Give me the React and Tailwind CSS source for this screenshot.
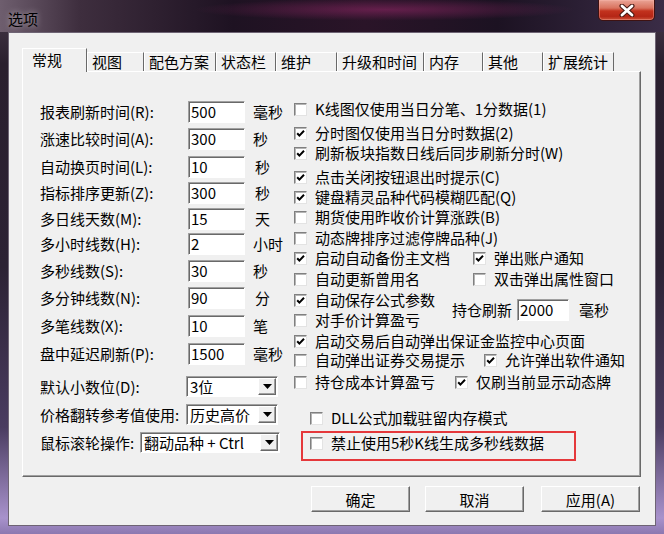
const fields = [
  ['报表刷新时间(R):', '500', '毫秒', 'ml-2', 'h-[27px]'],
  ['涨速比较时间(A):', '300', '秒', 'ml-2', 'h-[28px]'],
  ['自动换页时间(L):', '10', '秒', 'ml-[10px]', 'h-[26px]'],
  ['指标排序更新(Z):', '300', '秒', 'ml-[10px]', 'h-[26px]'],
  ['多日线天数(M):', '15', '天', 'ml-[10px]', 'h-[25px]'],
  ['多小时线数(H):', '2', '小时', 'ml-2', 'h-[27px]'],
  ['多秒线数(S):', '30', '秒', 'ml-2', 'h-[27px]'],
  ['多分钟线数(N):', '90', '分', 'ml-[10px]', 'h-[28px]'],
  ['多笔线数(X):', '10', '笔', 'ml-2', 'h-[28px]'],
  ['盘中延迟刷新(P):', '1500', '毫秒', 'ml-2', 'h-[33px]'],
];

const combos = [
  ['默认小数位(D):', '3位', 'w-[146px]', 'w-[92px]', 'h-[28px]'],
  ['价格翻转参考值使用:', '历史高价', 'w-[146px]', 'w-[92px]', 'h-[28px]'],
  ['鼠标滚轮操作:', '翻动品种 + Ctrl', 'w-[100px]', 'w-[140px]', 'h-[20px]'],
];

const tabs = [
  ['常规', 'w-[65px]'],
  ['视图', 'w-[57px]'],
  ['配色方案', 'w-[72px]'],
  ['状态栏', 'w-[60px]'],
  ['维护', 'w-[61px]'],
  ['升级和时间', 'w-[87px]'],
  ['内存', 'w-[59px]'],
  ['其他', 'w-[60px]'],
  ['扩展统计', 'w-[71px]'],
];

function Check({ on }) {
  return (
    <span className="w-[13px] h-[13px] shrink-0 bg-white border border-t-[#808080] border-l-[#808080] border-r-[#e3e3e3] border-b-[#e3e3e3] shadow-[inset_1px_1px_0_#b4b4b4] flex items-center justify-center">
      {on && (
        <svg width="9" height="9" viewBox="0 0 9 9">
          <path d="M1.2 4.2 L3.4 6.6 L8 1.8" stroke="#000" strokeWidth="2" fill="none" />
        </svg>
      )}
    </span>
  );
}

function CheckRow({ label, on, className = '' }) {
  return (
    <div className={'flex items-center h-[20px] gap-2 whitespace-nowrap ' + className}>
      <Check on={on} />
      <span className="leading-[20px]">{label}</span>
    </div>
  );
}

function Field({ value, w = 'w-[57px]' }) {
  return (
    <div className={'h-[22px] shrink-0 bg-white border border-t-[#a0a0a0] border-l-[#a0a0a0] border-r-white border-b-white shadow-[inset_1px_1px_0_#696969] pl-[2px] pt-[1px] leading-[17px] ' + w}>
      {value}
    </div>
  );
}

function Combo({ value, w }) {
  return (
    <div className={'h-[21px] shrink-0 flex items-center bg-white border border-t-[#a0a0a0] border-l-[#a0a0a0] border-r-white border-b-white shadow-[inset_1px_1px_0_#696969] ' + w}>
      <span className="flex-1 pl-[3px] leading-[19px] whitespace-pre">{value}</span>
      <span className="w-[18px] h-[17px] mr-px bg-[#f0f0f0] border border-t-white border-l-white border-r-[#696969] border-b-[#696969] shadow-[inset_-1px_-1px_0_#a0a0a0] flex items-center justify-center">
        <svg width="9" height="5" viewBox="0 0 9 5">
          <path d="M0 0h9L4.5 5z" fill="#000" />
        </svg>
      </span>
    </div>
  );
}

function Btn({ children }) {
  return (
    <button className="w-[99px] h-[26px] bg-[#f0f0f0] border border-t-white border-l-white border-r-[#696969] border-b-[#696969] shadow-[inset_-1px_-1px_0_#a0a0a0] text-[15px] leading-none">
      {children}
    </button>
  );
}

export default function App() {
  return (
    <div className="w-[664px] h-[534px] flex flex-col overflow-hidden text-black font-['Noto_Sans_CJK_SC',sans-serif] bg-[linear-gradient(180deg,#4a3c4c_0%,#2a1f2e_12%,#2c2234_50%,#4a3c60_80%,#a892cc_97%,#8c78b0_100%)]">
      {/* title bar */}
      <div className="h-[32px] shrink-0 flex items-start bg-[radial-gradient(ellipse_at_58%_30%,rgba(150,40,105,0.55),transparent_35%),linear-gradient(90deg,#6e5e6e_0%,#3e2e3e_12%,#1e1222_35%,#2a1428_55%,#1c1222_75%,#3a2c46_100%)]">
        <span className="ml-2 mt-[10px] text-[15px] leading-[17px] [text-shadow:0_0_6px_rgba(255,255,255,0.6)]">选项</span>
        <div className="ml-auto mr-[9px] w-[57px] h-[21px] rounded-b-[5px] border border-t-0 border-[#3e1212] bg-[linear-gradient(180deg,#eaa496_0%,#d9735f_40%,#c2321e_55%,#b52616_82%,#cc5238_100%)] shadow-[inset_0_0_0_1px_rgba(255,190,180,0.35)] flex items-center justify-center">
          <svg width="16" height="13" viewBox="0 0 16 13">
            <path d="M3 2 L13 11 M13 2 L3 11" stroke="#4a1a14" strokeWidth="5" strokeLinecap="round" />
            <path d="M3 2 L13 11 M13 2 L3 11" stroke="#fff" strokeWidth="2.8" strokeLinecap="round" />
          </svg>
        </div>
      </div>

      {/* client */}
      <div className="flex-1 mx-2 mb-2 bg-[#f0f0f0] border border-[#6e6474] flex flex-col text-[15px]">
        {/* tab strip */}
        <div className="relative z-10 ml-[13px] mt-[15px] h-[24px] -mb-px flex items-end">
          {tabs.map(([t, w], i) =>
            i === 0 ? (
              <div key={t} className={'h-[24px] bg-[#f0f0f0] border-t border-l border-r border-t-white border-l-white border-r-[#696969] pl-[9px] leading-[22px] ' + w}>
                {t}
              </div>
            ) : (
              <div key={t} className={'h-[19px] mb-px border-t border-r border-t-white border-r-[#696969] shadow-[inset_1px_0_0_#fff] pl-[5px] leading-[18px] whitespace-nowrap ' + w}>
                {t}
              </div>
            )
          )}
        </div>

        {/* tab panel */}
        <div className="relative ml-[13px] w-[619px] h-[406px] border border-t-white border-l-white border-r-[#696969] border-b-[#696969] shadow-[inset_-1px_-1px_0_#a0a0a0] flex">
          {/* left column */}
          <div className="w-[271px] shrink-0 pl-[17px] pt-[29px]">
            {fields.map(([label, v, unit, ml, h]) => (
              <div key={label} className={'flex items-start whitespace-nowrap ' + h}>
                <span className="w-[148px] shrink-0 leading-[22px]">{label}</span>
                <Field value={v} />
                <span className={'leading-[22px] ' + ml}>{unit}</span>
              </div>
            ))}
            {combos.map(([label, v, lw, w, h]) => (
              <div key={label} className={'flex items-start whitespace-nowrap ' + h}>
                <span className={'shrink-0 leading-[21px] ' + lw}>{label}</span>
                <Combo value={v} w={w} />
              </div>
            ))}
          </div>

          {/* right column */}
          <div className="flex-1 pt-[27px]">
            <CheckRow label="K线图仅使用当日分笔、1分数据(1)" />
            <CheckRow label="分时图仅使用当日分时数据(2)" on className="mt-1" />
            <CheckRow label="刷新板块指数日线后同步刷新分时(W)" on />
            <CheckRow label="点击关闭按钮退出时提示(C)" on className="mt-1" />
            <CheckRow label="键盘精灵品种代码模糊匹配(Q)" on />
            <CheckRow label="期货使用昨收价计算涨跌(B)" />
            <CheckRow label="动态牌排序过滤停牌品种(J)" className="mt-px" />
            <div className="flex">
              <CheckRow label="启动自动备份主文档" on className="w-[179px]" />
              <CheckRow label="弹出账户通知" on />
            </div>
            <div className="flex mt-px">
              <CheckRow label="自动更新曾用名" className="w-[179px]" />
              <CheckRow label="双击弹出属性窗口" />
            </div>
            <div className="flex items-center mt-px">
              <div className="w-[158px] shrink-0">
                <CheckRow label="自动保存公式参数" on />
                <CheckRow label="对手价计算盈亏" />
              </div>
              <span className="whitespace-nowrap">持仓刷新</span>
              <div className="ml-[5px]">
                <Field value="2000" w="w-[52px]" />
              </div>
              <span className="ml-[10px] whitespace-nowrap">毫秒</span>
            </div>
            <CheckRow label="启动交易后自动弹出保证金监控中心页面" on className="mt-px" />
            <div className="flex -mt-px">
              <CheckRow label="自动弹出证券交易提示" className="w-[190px]" />
              <CheckRow label="允许弹出软件通知" on />
            </div>
            <div className="flex mt-[2px]">
              <CheckRow label="持仓成本计算盈亏" className="w-[161px]" />
              <CheckRow label="仅刷当前显示动态牌" on />
            </div>
            <CheckRow label="DLL公式加载驻留内存模式" className="mt-4 pl-4" />
            <div className="ml-[7px] mt-[3px] w-[275px] h-[30px] border-2 border-[#e5383b] pl-[7px]">
              <CheckRow label="禁止使用5秒K线生成多秒线数据" />
            </div>
          </div>
        </div>

        {/* buttons */}
        <div className="mt-[9px] pr-[15px] flex justify-end">
          <Btn>确定</Btn>
          <div className="ml-[15px]">
            <Btn>取消</Btn>
          </div>
          <div className="ml-[17px]">
            <Btn>应用(A)</Btn>
          </div>
        </div>
      </div>
    </div>
  );
}
